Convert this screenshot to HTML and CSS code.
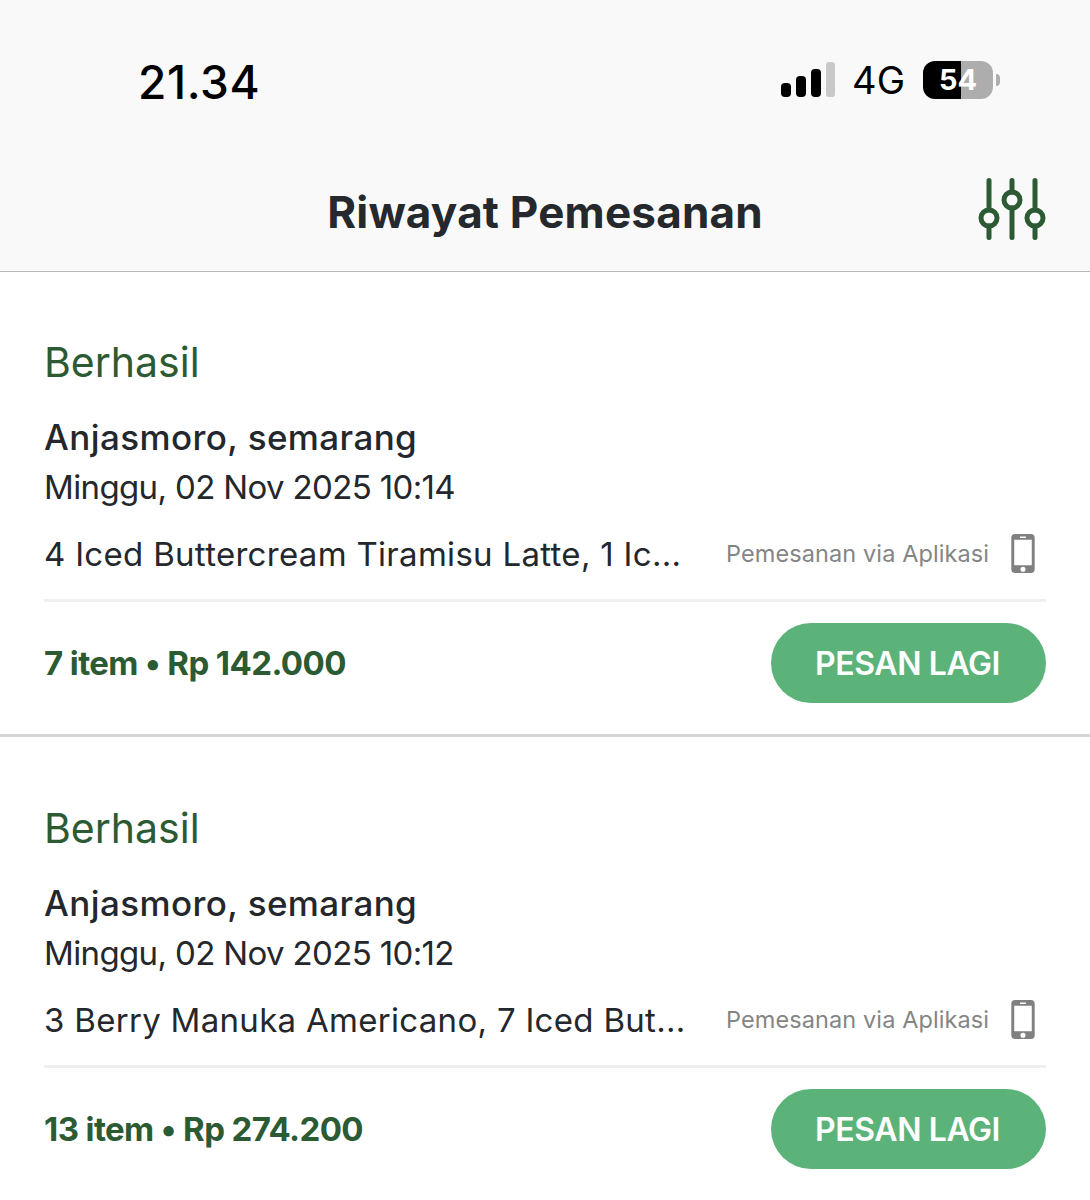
FILE: index.html
```html
<!DOCTYPE html>
<html lang="id">
<head>
<meta charset="utf-8">
<title>Riwayat Pemesanan</title>
<link rel="stylesheet" href="styles.css">
</head>
<body>
<header class="top">
  <div class="status">
    <span class="time">21.34</span>
    <div class="status-right">
      <svg class="signal" width="54" height="36" viewBox="0 0 54 36"><rect x="0" y="21" width="10" height="14" rx="4" fill="#000"/><rect x="15" y="14" width="10" height="21" rx="4" fill="#000"/><rect x="30" y="7" width="10" height="28" rx="4" fill="#000"/><rect x="45" y="0" width="9" height="35" rx="3" fill="#c9c9c9"/></svg>
      <span class="net">4G</span>
      <div class="battery"><span class="batt-num">54</span></div>
      <span class="batt-cap"></span>
    </div>
  </div>
  <div class="titlebar">
    <h1 class="title">Riwayat Pemesanan</h1>
    <svg class="filter" width="68" height="64" viewBox="0 0 68 64" fill="none" stroke="#2b5a33" stroke-width="5" stroke-linecap="round"><path d="M11 3.5v29.5M11 49v11.5M34 3.5v11.5M34 31v29.5M57 3.5v29.5M57 49v11.5"/><circle cx="11" cy="41" r="8"/><circle cx="34" cy="23" r="8"/><circle cx="57" cy="41" r="8"/></svg>
  </div>
</header>
<main>
  <article class="order">
    <div class="state">Berhasil</div>
    <div class="place">Anjasmoro, semarang</div>
    <div class="date">Minggu, 02 Nov 2025 10:14</div>
    <div class="items">
      <span class="names">4 Iced Buttercream Tiramisu Latte, 1 Ic...</span>
      <span class="via">Pemesanan via Aplikasi</span>
      <svg class="phone" width="24" height="39" viewBox="0 0 24 40"><path fill-rule="evenodd" fill="#808080" d="M4 0h16a4 4 0 0 1 4 4v32a4 4 0 0 1-4 4H4a4 4 0 0 1-4-4V4a4 4 0 0 1 4-4zM3 6v26h18V6zM9 2.6h6v1.4H9zM12 33.5a2.6 2.6 0 1 0 0 5.2a2.6 2.6 0 1 0 0-5.2z"/></svg>
    </div>
    <div class="foot">
      <span class="total">7 item • Rp 142.000</span>
      <button class="again">PESAN LAGI</button>
    </div>
  </article>
  <article class="order">
    <div class="state">Berhasil</div>
    <div class="place">Anjasmoro, semarang</div>
    <div class="date">Minggu, 02 Nov 2025 10:12</div>
    <div class="items">
      <span class="names">3 Berry Manuka Americano, 7 Iced But...</span>
      <span class="via">Pemesanan via Aplikasi</span>
      <svg class="phone" width="24" height="39" viewBox="0 0 24 40"><path fill-rule="evenodd" fill="#808080" d="M4 0h16a4 4 0 0 1 4 4v32a4 4 0 0 1-4 4H4a4 4 0 0 1-4-4V4a4 4 0 0 1 4-4zM3 6v26h18V6zM9 2.6h6v1.4H9zM12 33.5a2.6 2.6 0 1 0 0 5.2a2.6 2.6 0 1 0 0-5.2z"/></svg>
    </div>
    <div class="foot">
      <span class="total">13 item • Rp 274.200</span>
      <button class="again">PESAN LAGI</button>
    </div>
  </article>
</main>
</body>
</html>
```
FILE: styles.css
```css
* { box-sizing: border-box; }
html, body { margin: 0; padding: 0; }
body { width: 1090px; height: 1200px; overflow: hidden; background: #fff; font-family: "Inter", "Liberation Sans", sans-serif; color: #24272b; }
.top { height: 272px; background: #f9f9f9; border-bottom: 1px solid #b9b9b9; }
.status { height: 150px; display: flex; justify-content: space-between; padding: 55px 90px 0 138px; }
.time { font-size: 46px; font-weight: 500; line-height: 54px; letter-spacing: .6px; color: #000; height: 54px; }
.status-right { display: flex; align-items: center; height: 50px; }
.net { font-size: 38px; line-height: 50px; color: #000; margin-left: 17px; }
.battery { width: 70px; height: 38px; margin-left: 18px; border-radius: 12px; background: linear-gradient(90deg, #000 0 54%, #adadad 54% 100%); display: flex; align-items: center; justify-content: center; }
.batt-num { color: #fff; font-size: 29px; font-weight: 700; line-height: 38px; }
.batt-cap { width: 4px; height: 12px; margin-left: 3px; background: #adadad; border-radius: 0 6px 6px 0; }
.titlebar { height: 121px; position: relative; display: flex; justify-content: center; align-items: flex-start; padding-top: 34px; }
.title { margin: 0; font-size: 44px; font-weight: 700; line-height: 56px; letter-spacing: .2px; color: #25282c; }
.filter { position: absolute; top: 27px; right: 44px; }
.order { height: 465px; margin-bottom: 1px; padding: 65px 44px 0; border-bottom: 3px solid #d4d4d4; }
.order:last-child { border-bottom: 0; }
.state { font-size: 41px; line-height: 50px; color: #2b5a33; font-weight: 400; }
.place { margin-top: 25px; font-size: 35px; line-height: 50px; font-weight: 500; letter-spacing: .4px; }
.date { font-size: 33px; line-height: 50px; letter-spacing: -.64px; }
.items { margin-top: 21px; height: 69px; padding-bottom: 25px; border-bottom: 3px solid #efefef; display: flex; align-items: center; }
.names { width: 682px; font-size: 33px; line-height: 44px; letter-spacing: .3px; white-space: nowrap; }
.via { font-size: 23.5px; color: #858585; line-height: 30px; width: 285px; letter-spacing: .1px; }
.phone { display: block; }
.foot { display: flex; justify-content: space-between; align-items: center; margin-top: 21px; }
.total { font-size: 33px; font-weight: 700; letter-spacing: -.6px; color: #2b5a33; }
.again { width: 275px; height: 80px; border: 0; border-radius: 40px; background: #5bb37a; color: #fff; font-family: inherit; font-size: 32px; font-weight: 600; letter-spacing: -.4px; padding: 0 2px 0 0; }
```
